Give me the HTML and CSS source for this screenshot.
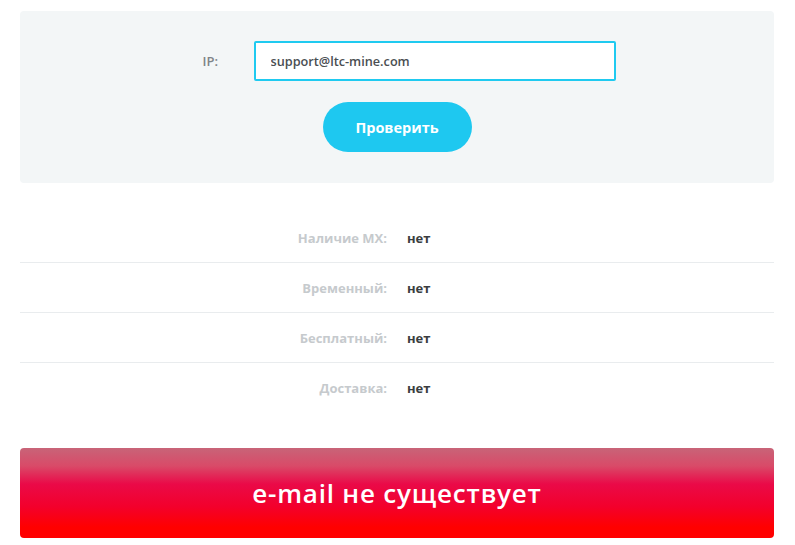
FILE: index.html
```html
<!DOCTYPE html>
<html lang="ru">
<head>
<meta charset="utf-8">
<title>Проверка e-mail</title>
<link rel="stylesheet" href="styles.css">
</head>
<body>
<div class="page">
  <form class="panel">
    <div class="field">
      <label class="field-label" for="ip">IP:</label>
      <input class="field-input" id="ip" type="text" value="support@ltc-mine.com">
    </div>
    <button class="check-btn" type="button">Проверить</button>
  </form>
  <div class="results">
    <div class="row"><span class="row-label">Наличие MX:</span><span class="row-value">нет</span></div>
    <div class="row"><span class="row-label">Временный:</span><span class="row-value">нет</span></div>
    <div class="row"><span class="row-label">Бесплатный:</span><span class="row-value">нет</span></div>
    <div class="row"><span class="row-label">Доставка:</span><span class="row-value">нет</span></div>
  </div>
  <div class="banner">e-mail не существует</div>
</div>
</body>
</html>
```
FILE: styles.css
```css
html, body {
  margin: 0;
  padding: 0;
  background: #ffffff;
}
body {
  font-family: "Open Sans", "DejaVu Sans", sans-serif;
}
.page {
  padding: 11px 21px 0 20px;
}
.panel {
  background: #f3f6f7;
  border-radius: 4px;
  height: 172px;
  box-sizing: border-box;
  padding-top: 30px;
  display: flex;
  flex-direction: column;
  align-items: center;
  margin: 0;
}
.field {
  display: flex;
  align-items: center;
  margin-left: 24px;
}
.field-label {
  font-size: 13px;
  font-weight: 600;
  color: #7f8487;
  width: 51px;
}
.field-input {
  width: 362px;
  height: 40px;
  box-sizing: border-box;
  border: 2px solid #1fcaf0;
  border-radius: 2px;
  padding: 0 15px;
  font-family: "Open Sans", sans-serif;
  font-size: 12.7px;
  font-weight: 600;
  color: #4a4e52;
  background: #fff;
  outline: none;
}
.check-btn {
  margin-top: 21px;
  width: 149px;
  height: 50px;
  border: none;
  border-radius: 25px;
  background: #1ec8f0;
  color: #fff;
  font-family: "Open Sans", sans-serif;
  font-size: 14.5px;
  font-weight: 700;
  cursor: pointer;
}
.results {
  margin-top: 30px;
}
.row {
  display: flex;
  align-items: center;
  height: 49px;
  border-bottom: 1px solid #e9ecee;
  font-size: 13px;
  font-weight: 700;
}
.row:last-child {
  border-bottom: none;
}
.row-label {
  width: 367px;
  text-align: right;
  color: #c6cacd;
}
.row-value {
  margin-left: 20px;
  color: #3a3d40;
}
.banner {
  margin-top: 36px;
  height: 90px;
  border-radius: 4px;
  background: linear-gradient(to bottom, #c86478 0%, #d94a68 20%, #ea0a48 40%, #f3002c 65%, #ff0000 88%, #ff0000 100%);
  color: #fff;
  font-family: "Open Sans", sans-serif;
  font-size: 26px;
  letter-spacing: 0.8px;
  font-weight: 600;
  display: flex;
  align-items: center;
  justify-content: center;
}
```
